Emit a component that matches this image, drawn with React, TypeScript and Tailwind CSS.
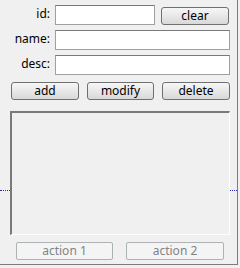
import React from "react";

const font = { fontFamily: '"Noto Sans", "Open Sans", sans-serif' };

function Btn({ children, w }: { children: React.ReactNode; w: string }) {
  return (
    <button
      className={`${w} h-[18px] rounded-[3px] border border-[#707070] bg-gradient-to-b from-[#f6f6f6] via-[#e8e8e8] to-[#d8d8d8] text-[12px] leading-none text-black flex items-center justify-center`}
    >
      {children}
    </button>
  );
}

function DisabledBtn({ children, w }: { children: React.ReactNode; w: string }) {
  return (
    <button
      className={`${w} h-[18px] rounded-[2px] border border-[#adb2b5] bg-[#f4f4f4] text-[12px] leading-none text-[#838383] flex items-center justify-center`}
    >
      {children}
    </button>
  );
}

function Field({ w }: { w: string }) {
  return (
    <div
      className={`${w} h-[20px] bg-white border border-[#a0a0a0] border-t-[#7a7a7a]`}
    />
  );
}

export default function App() {
  return (
    <div className="w-[240px] h-[268px] bg-[#f0f0f0]" style={font}>
      <div className="w-[238px] h-[265px] border-r border-b border-[#7c7c7c] flex flex-col pt-[5px]">
        <div className="flex items-center">
          <div className="w-[50px] text-right text-[12px] leading-none text-black -mt-[3px]">id:</div>
          <div className="ml-[5px]">
            <Field w="w-[100px]" />
          </div>
          <div className="ml-[6px] mt-[1px]">
            <Btn w="w-[68px]">clear</Btn>
          </div>
        </div>
        <div className="flex items-center mt-[5px]">
          <div className="w-[50px] text-right text-[12px] leading-none text-black -mt-[3px]">name:</div>
          <div className="ml-[5px]">
            <Field w="w-[175px]" />
          </div>
        </div>
        <div className="flex items-center mt-[5px]">
          <div className="w-[50px] text-right text-[12px] leading-none text-black -mt-[3px]">desc:</div>
          <div className="ml-[5px]">
            <Field w="w-[175px]" />
          </div>
        </div>
        <div className="flex items-center mt-[7px] pl-[11px] gap-[8px]">
          <Btn w="w-[68px]">add</Btn>
          <Btn w="w-[67px]">modify</Btn>
          <Btn w="w-[68px]">delete</Btn>
        </div>
        <div className="flex items-start mt-[11px]">
          <div className="w-[10px] mt-[79px] border-t border-dotted border-[#2c2cb0]" />
          <div className="w-[221px] h-[124px] border-t-2 border-l-2 border-t-[#7a7a7a] border-l-[#7a7a7a] border-r border-b border-r-white border-b-white bg-[#f0f0f0]" />
          <div className="w-[7px] mt-[79px] border-t border-dotted border-[#2c2cb0]" />
        </div>
        <div className="flex items-center mt-[7px] pl-[16px] gap-[13px]">
          <DisabledBtn w="w-[97px]">action 1</DisabledBtn>
          <DisabledBtn w="w-[98px]">action 2</DisabledBtn>
        </div>
      </div>
    </div>
  );
}
